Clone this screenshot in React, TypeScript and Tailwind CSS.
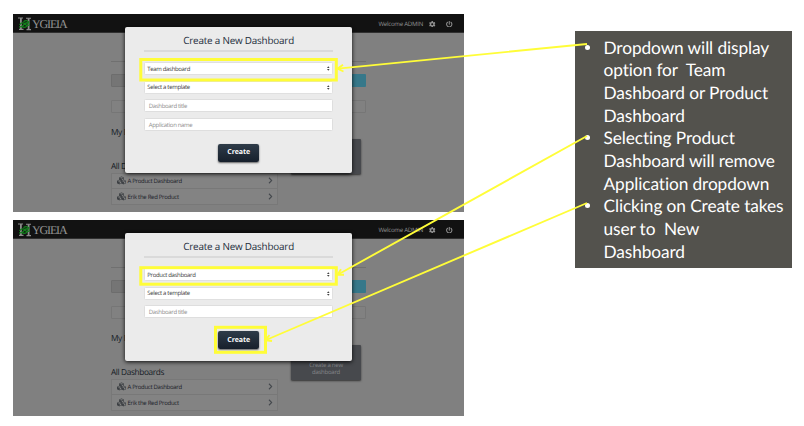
import React from "react";
import { FaCog, FaPowerOff, FaCubes, FaChevronRight } from "react-icons/fa";

function Logo() {
  return (
    <div className="flex items-start pt-[3px] pl-[5px]">
      <svg width="14" height="14" viewBox="0 0 14 14" fill="none">
        <path d="M0 1h5M1 12.4h4.5M8 1.2h5M8.5 12.6H13" stroke="#8c8c8c" strokeWidth="1.1" />
        <path d="M2.9 1v11.4M10.6 1.2v11.4" stroke="#8c8c8c" strokeWidth="1.8" />
        <path
          d="M1 9.800c2 .3 4-.6 5-2.200 1-1.500 3-2.300 5.200-1.500M1.500 7.800c1.200-1.800 3-2.300 4.500-1.600 1.200.6 1.600 2.300 3.200 2.300 1 0 2-.6 2.300-1.700M5.500 4.800c1.500-1.300 4-1.200 5.700.3M4 9.800c1.500.8 3.500.5 5-.6"
          stroke="#12801c"
          strokeWidth="1.3"
        />
      </svg>
      <span className="pt-[1px] font-['Liberation_Serif',serif] text-[12px] leading-[13px] tracking-[-1.150px] text-[#929292]">
        YGIEIA
      </span>
    </div>
  );
}

function Header() {
  return (
    <header className="flex h-[19px] justify-between border-b border-[#303030] bg-[#121212]">
      <Logo />
      <div className="flex items-center pt-[2px] pr-[11.500px] text-[#929292]">
        <span className="text-[6.100px] leading-[8px] tracking-[-0.250px]">Welcome ADMIN</span>
        <FaCog className="ml-[6px] size-[6.500px]" />
        <FaPowerOff className="ml-[10.500px] size-[6.500px]" />
      </div>
    </header>
  );
}

function ListRow({ label }: { label: string }) {
  return (
    <li className="flex h-[15.700px] items-center border-b border-[#787878] pr-[3px] pl-[5px]">
      <FaCubes className="size-[9px] text-[#3d4044]" />
      <span className="ml-[1.500px] text-[6px] leading-[8px] tracking-[-0.290px] text-[#1b2029]">{label}</span>
      <FaChevronRight className="ml-auto size-[7px] text-[#44484d]" />
    </li>
  );
}

function Page() {
  return (
    <main className="ml-[98px] w-[255px] text-[#161c26]">
      <div className="mt-[27.500px] h-[1.500px] bg-[#707070]" />
      <div className="mt-[11.500px] flex h-[13px]">
        <div className="w-1/2 rounded-l-[1px] border border-[#6d6d6d] bg-[#757575]" />
        <div className="w-1/2 rounded-r-[1px] bg-[#36788a]" />
      </div>
      <div className="mt-[13.500px] h-[12.500px] rounded-[1px] border border-[#767676] bg-[#818181]" />
      <div className="flex">
        <div className="w-[167px] tracking-[-0.380px]">
          <h2 className="mt-[14px] text-[8.300px] leading-[12px]">My Dashboards</h2>
          <h2 className="mt-[22px] text-[8.300px] leading-[12px]">All Dashboards</h2>
          <ul className="border border-b-0 border-[#787878] bg-[#838383]">
            <ListRow label="A Product Dashboard" />
            <ListRow label="Erik the Red Product" />
          </ul>
        </div>
        <div className="mt-[26px] ml-[13px] flex h-[35px] w-[70px] flex-col items-center justify-end rounded-[1px] bg-[#47494d] pb-[3px] text-center text-[6px] leading-[7.400px] tracking-[-0.250px] text-[#85878a] shadow-[0_1px_2px_#333]">
          <span>Create a new</span>
          <span>dashboard</span>
        </div>
      </div>
    </main>
  );
}

function Select({ label }: { label: string }) {
  return (
    <div className="flex h-[13px] items-center justify-between rounded-[1.500px] border border-[#e0e0e0] bg-white pr-[2px] pl-[2px]">
      <span className="text-[6px] leading-[8px] tracking-[-0.330px] text-[#3c3c3c]">{label}</span>
      <svg width="2.600" height="5" viewBox="0 0 3 5" fill="#444">
        <path d="M0 2 1.500 0 3 2zM0 3h3L1.500 5z" />
      </svg>
    </div>
  );
}

function Field({ placeholder }: { placeholder: string }) {
  return (
    <div className="flex h-[13px] items-center rounded-[1.500px] border border-[#dedede] bg-white pl-[3.500px] text-[6px] leading-[8px] tracking-[-0.330px] text-[#8e8e8e]">
      {placeholder}
    </div>
  );
}

function Modal({ type, fields }: { type: string; fields: string[] }) {
  return (
    <section className="absolute top-[12.500px] left-[112.300px] w-[226.700px] rounded-[2px] bg-[#ebebeb] px-[19px] pb-[11.500px] shadow-[0_1px_4px_rgba(0,0,0,0.9)]">
      <h1 className="pt-[6px] text-center text-[9.900px] leading-[15px] tracking-[-0.200px] text-[#242d3b]">
        Create a New Dashboard
      </h1>
      <div className="mt-[2.500px] h-[1.500px] bg-[#dadada]" />
      <div className="mt-[10.800px] flex flex-col gap-[5.600px]">
        <Select label={type} />
        <Select label="Select a template" />
        {fields.map((f) => (
          <Field key={f} placeholder={f} />
        ))}
      </div>
      <div className="mx-auto mt-[13px] flex h-[17.700px] w-[41px] items-center justify-center rounded-[2px] bg-linear-to-b from-[#2f3c49] to-[#17202c] pt-[1.500px] text-[7px] font-bold tracking-[-0.100px] text-white shadow-[0_1px_2px_rgba(0,0,0,0.6)]">
        Create
      </div>
    </section>
  );
}

function Screen({ type, fields, size }: { type: string; fields: string[]; size: string }) {
  return (
    <div className={`relative w-[451px] overflow-hidden bg-[#808080] font-['Open_Sans',sans-serif] ${size}`}>
      <Header />
      <Page />
      <Modal type={type} fields={fields} />
    </div>
  );
}

const notes = [
  ["Dropdown will display", "option for  Team", "Dashboard or Product", "Dashboard"],
  ["Selecting Product", "Dashboard will remove", "Application dropdown"],
  ["Clicking on Create takes", "user to  New", "Dashboard"],
];

function Notes() {
  return (
    <ul className="mt-[31px] ml-[111px] h-[237px] w-[217px] bg-[#53524d] pt-[5.500px] font-['Lato',sans-serif] text-[17.300px] leading-[22.700px] tracking-[-0.100px] text-white">
      {notes.map((lines) => (
        <li key={lines[0]} className="flex">
          <span className="mt-[8px] ml-[9.500px] size-[5px] shrink-0 rounded-full bg-white" />
          <div className="ml-[14px] whitespace-pre">
            {lines.map((line) => (
              <div key={line}>{line}</div>
            ))}
          </div>
        </li>
      ))}
    </ul>
  );
}

function Annotations() {
  return (
    <svg className="absolute inset-0" width="804" height="426" fill="none" stroke="#fffd38">
      <rect x="140.800" y="59.500" width="195.500" height="20.500" strokeWidth="3" />
      <rect x="140.800" y="267.700" width="195.500" height="16.500" strokeWidth="3" />
      <rect x="215.500" y="327.300" width="50" height="25" strokeWidth="3" />
      <path d="M587 44 338 68.600M587 136 338 274.500M587 203 266 340" strokeWidth="1.900" />
      <path
        d="M343 64.800 337.500 68.700 343.500 71.500M341 269.300 337.500 274.700 344 274.700M269.500 335 265.500 340.200 272 341"
        strokeWidth="1.900"
      />
    </svg>
  );
}

export default function App() {
  return (
    <div className="relative flex h-[426px] w-[804px] overflow-hidden bg-white [text-rendering:geometricPrecision]">
      <div className="mt-[14px] ml-[13px] flex flex-col gap-[8px]">
        <Screen type="Team dashboard" fields={["Dashboard title", "Application name"]} size="h-[198px]" />
        <Screen type="Product dashboard" fields={["Dashboard title"]} size="h-[196px]" />
      </div>
      <Notes />
      <Annotations />
    </div>
  );
}
